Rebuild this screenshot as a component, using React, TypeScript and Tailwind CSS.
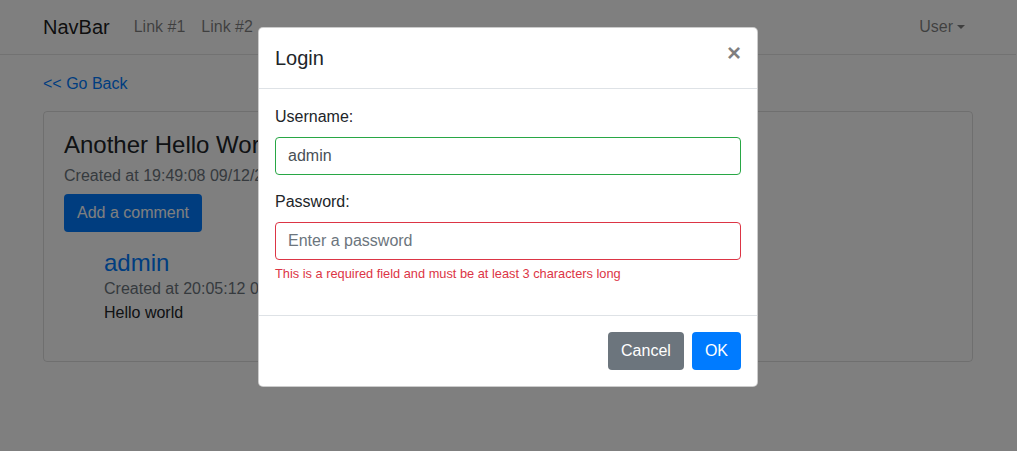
import React from "react";

const font = { fontFamily: '"Liberation Sans", Arial, sans-serif' };

const NavBar = () => (
  <nav className="h-[55px] border-b border-black/10 bg-white">
    <div className="mx-auto flex h-full max-w-[960px] items-center px-[15px]">
      <a className="mr-4 text-[20px] leading-[30px] text-black/90">NavBar</a>
      <a className="px-2 leading-6 text-black/50">Link #1</a>
      <a className="px-2 leading-6 text-black/50">Link #2</a>
      <a className="ml-auto flex items-center px-2 leading-6 text-black/50">
        User
        <span className="ml-[4px] inline-block h-0 w-0 border-x-[4.8px] border-t-[4.8px] border-x-transparent border-t-black/50" />
      </a>
    </div>
  </nav>
);

const PostCard = () => (
  <div className="rounded-[4px] border border-black/[0.125] p-5">
    <h4 className="mb-3 text-[24px] leading-[26px] text-[#212529]">
      Another Hello World
    </h4>
    <div className="-mt-[6px] leading-6 text-[#6c757d]">
      Created at 19:49:08 09/12/2020
    </div>
    <button className="mt-[6px] h-[38px] rounded-[4px] bg-[#007bff] px-[13px] text-white">
      Add a comment
    </button>
    <div className="mt-4 mb-4 pl-10">
      <a className="block text-[24px] leading-[29px] text-[#007bff]">admin</a>
      <div className="leading-6 text-[#6c757d]">Created at 20:05:12 09/12/2020</div>
      <div className="leading-6 text-[#212529]">Hello world</div>
    </div>
  </div>
);

const LoginModal = () => (
  <div className="absolute left-0 right-px top-[27px] mx-auto w-[500px] rounded-[5px] border border-black/20 bg-white">
    <div className="flex items-start justify-between border-b border-[#dee2e6] p-4">
      <h5 className="text-[20px] leading-[28px] text-[#212529]">Login</h5>
      <button className="-mt-[6px] text-[24px] font-bold leading-[30px] text-black/50">
        ×
      </button>
    </div>
    <div className="p-4">
      <div className="mb-[15px]">
        <label className="mb-2 block leading-6 text-[#212529]">Username:</label>
        <input
          className="block h-[38px] w-full rounded-[4px] border border-[#28a745] px-3 text-[#495057] outline-none"
          defaultValue="admin"
        />
      </div>
      <div className="mb-4">
        <label className="mb-2 block leading-6 text-[#212529]">Password:</label>
        <input
          type="password"
          className="block h-[38px] w-full rounded-[4px] border border-[#dc3545] px-3 text-[#495057] outline-none placeholder:text-[#6c757d]"
          placeholder="Enter a password"
        />
        <div className="mt-1 text-[12.8px] leading-[19px] text-[#dc3545]">
          This is a required field and must be at least 3 characters long
        </div>
      </div>
    </div>
    <div className="flex justify-end gap-2 border-t border-[#dee2e6] px-4 py-4">
      <button className="h-[38px] rounded-[4px] bg-[#6c757d] px-[13px] text-white">Cancel</button>
      <button className="h-[38px] rounded-[4px] bg-[#007bff] px-[13px] text-white">OK</button>
    </div>
  </div>
);

export default function App() {
  return (
    <div className="relative h-[451px] overflow-hidden bg-white pr-px text-base" style={font}>
      <NavBar />
      <div className="mx-auto max-w-[960px] px-[15px]">
        <a className="mt-[17px] mb-[15px] block leading-6 text-[#007bff]">&lt;&lt; Go Back</a>
        <PostCard />
      </div>
      <div className="absolute inset-0 bg-black/50" />
      <LoginModal />
    </div>
  );
}
